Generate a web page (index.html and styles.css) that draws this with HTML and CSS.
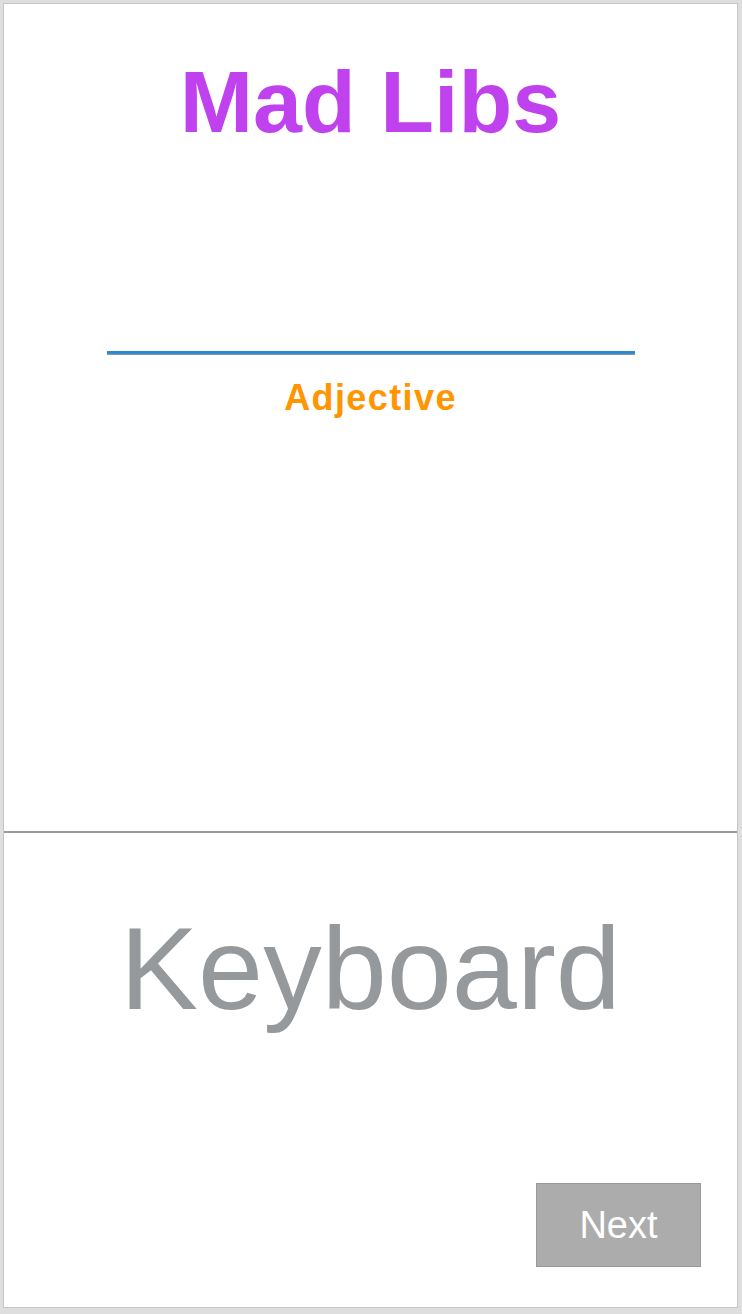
FILE: index.html
```html
<!DOCTYPE html>
<html>
<head>
<meta charset="utf-8">
<link rel="stylesheet" href="styles.css">
</head>
<body>
<div class="frame">
  <section class="story">
    <h1 class="title">Mad Libs</h1>
    <div class="blank"></div>
    <div class="hint">Adjective</div>
  </section>
  <section class="keyboard">
    <div class="keyboard-label">Keyboard</div>
    <div class="actions">
      <button class="next">Next</button>
    </div>
  </section>
</div>
</body>
</html>
```
FILE: styles.css
```css
html, body {
  margin: 0;
  padding: 0;
  background: #dedede;
  font-family: "Liberation Sans", Arial, sans-serif;
}
.frame {
  margin: 3px 4px 6px 3px;
  height: 1305px;
  box-sizing: border-box;
  border: 1px solid #c6c6c6;
  background: #ffffff;
  display: flex;
  flex-direction: column;
}
.story {
  flex: 1;
  display: flex;
  flex-direction: column;
  align-items: center;
  border-bottom: 2px solid #999b9d;
}
.title {
  margin: 54px 0 0;
  font-size: 88px;
  line-height: 88px;
  font-weight: bold;
  color: #c041ee;
}
.blank {
  margin-top: 205px;
  width: 528px;
  height: 3px;
  background: #2d8bd0;
  border-bottom: 1px solid #8c9aa6;
}
.hint {
  margin-top: 25px;
  font-size: 36px;
  line-height: 36px;
  font-weight: bold;
  letter-spacing: 1.4px;
  color: #ff9500;
}
.keyboard {
  height: 474px;
  display: flex;
  flex-direction: column;
  align-items: center;
}
.keyboard-label {
  margin-top: 77px;
  font-size: 117px;
  line-height: 117px;
  color: #95999c;
}
.actions {
  margin-top: auto;
  align-self: stretch;
  display: flex;
  justify-content: flex-end;
  padding: 0 36px 40px 0;
}
.next {
  width: 165px;
  height: 84px;
  border: 1px solid #979a9c;
  background: #acacac;
  color: #ffffff;
  font-family: "Liberation Sans", Arial, sans-serif;
  font-size: 38px;
  padding: 0;
}
```
